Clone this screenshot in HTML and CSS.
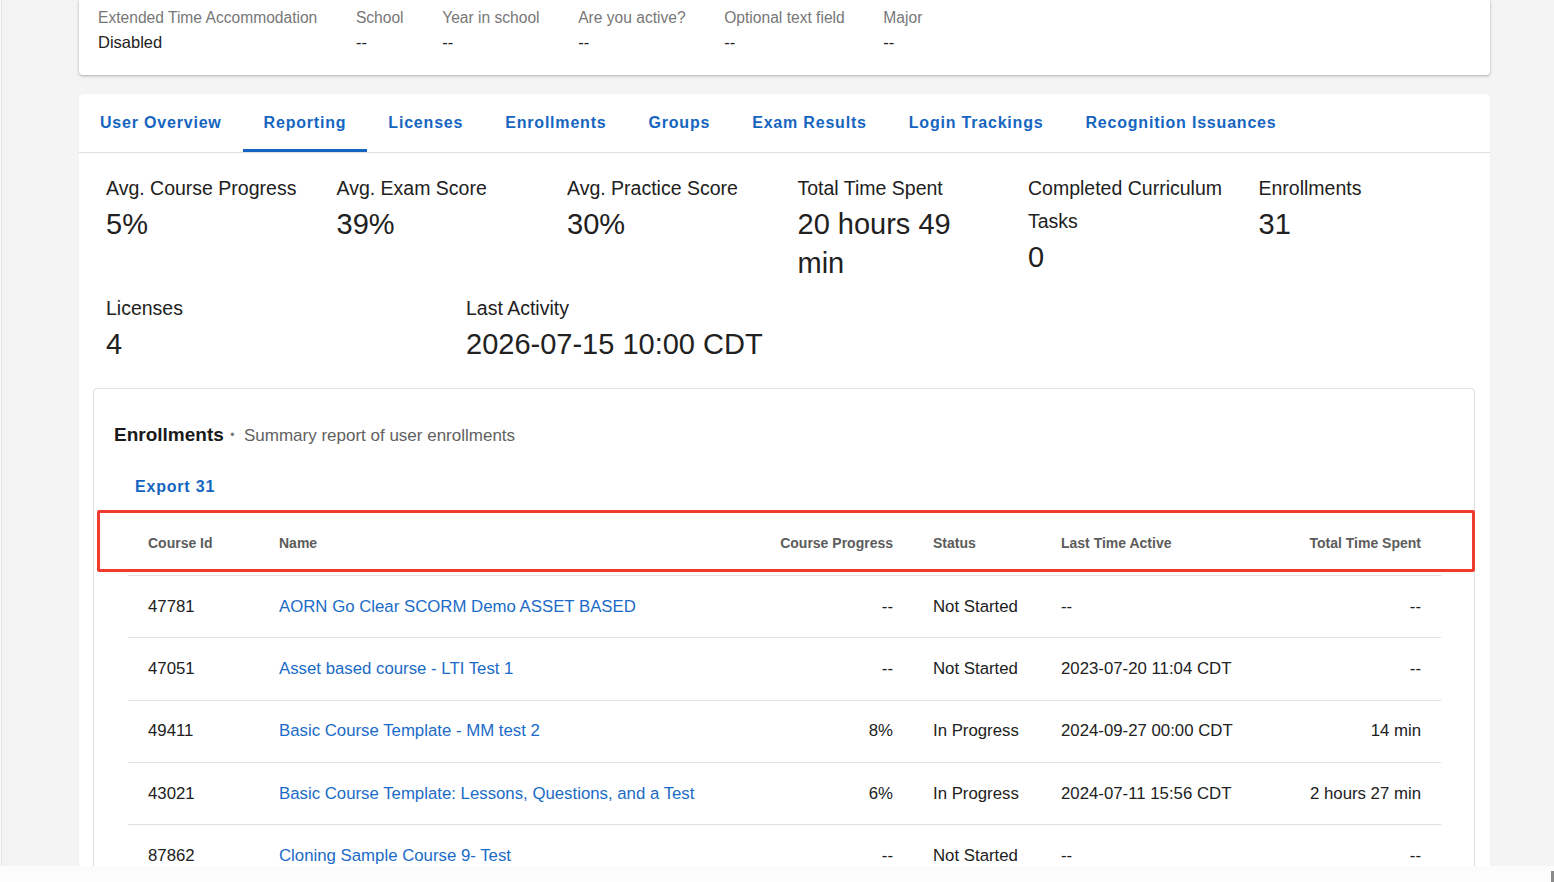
FILE: index.html
```html
<!DOCTYPE html>
<html lang="en">
<head>
	<meta charset="UTF-8">
	<title>User Reporting</title>
	<link rel="stylesheet" href="styles.css">
</head>
<body>
    <div class="profile-card">
        <div class="field">
            <div class="field-label">Extended Time Accommodation</div>
            <div class="field-value">Disabled</div>
        </div>
        <div class="field">
            <div class="field-label">School</div>
            <div class="field-value">--</div>
        </div>
        <div class="field">
            <div class="field-label">Year in school</div>
            <div class="field-value">--</div>
        </div>
        <div class="field">
            <div class="field-label">Are you active?</div>
            <div class="field-value">--</div>
        </div>
        <div class="field">
            <div class="field-label">Optional text field</div>
            <div class="field-value">--</div>
        </div>
        <div class="field">
            <div class="field-label">Major</div>
            <div class="field-value">--</div>
        </div>
    </div>

    <div class="main-card">
        <ul class="tab-header">
            <li>User Overview</li>
            <li class="active">Reporting</li>
            <li>Licenses</li>
            <li>Enrollments</li>
            <li>Groups</li>
            <li>Exam Results</li>
            <li>Login Trackings</li>
            <li>Recognition Issuances</li>
        </ul>

        <div class="stats">
            <div class="stats-row">
                <div class="stat">
                    <div class="stat-label">Avg. Course Progress</div>
                    <div class="stat-value">5%</div>
                </div>
                <div class="stat">
                    <div class="stat-label">Avg. Exam Score</div>
                    <div class="stat-value">39%</div>
                </div>
                <div class="stat">
                    <div class="stat-label">Avg. Practice Score</div>
                    <div class="stat-value">30%</div>
                </div>
                <div class="stat">
                    <div class="stat-label">Total Time Spent</div>
                    <div class="stat-value">20 hours 49 min</div>
                </div>
                <div class="stat">
                    <div class="stat-label">Completed Curriculum Tasks</div>
                    <div class="stat-value">0</div>
                </div>
                <div class="stat">
                    <div class="stat-label">Enrollments</div>
                    <div class="stat-value">31</div>
                </div>
            </div>
            <div class="stats-row stats-row-2">
                <div class="stat">
                    <div class="stat-label">Licenses</div>
                    <div class="stat-value">4</div>
                </div>
                <div class="stat">
                    <div class="stat-label">Last Activity</div>
                    <div class="stat-value">2026-07-15 10:00 CDT</div>
                </div>
            </div>
        </div>

        <div class="report-box">
            <div class="report-title">
                <span class="report-name">Enrollments</span>
                <span class="dot">&bull;</span>
                <span class="report-desc">Summary report of user enrollments</span>
            </div>
            <div class="report-actions">
                <button class="text-btn">Export 31</button>
            </div>

            <table class="report-table">
                <colgroup>
                    <col class="c-id">
                    <col class="c-name">
                    <col class="c-progress">
                    <col class="c-status">
                    <col class="c-active">
                    <col class="c-time">
                </colgroup>
                <thead>
                    <tr>
                        <th>Course Id</th>
                        <th>Name</th>
                        <th class="num">Course Progress</th>
                        <th>Status</th>
                        <th>Last Time Active</th>
                        <th class="num">Total Time Spent</th>
                    </tr>
                </thead>
                <tbody>
                    <tr>
                        <td>47781</td>
                        <td><a href="#">AORN Go Clear SCORM Demo ASSET BASED</a></td>
                        <td class="num">--</td>
                        <td>Not Started</td>
                        <td>--</td>
                        <td class="num">--</td>
                    </tr>
                    <tr>
                        <td>47051</td>
                        <td><a href="#">Asset based course - LTI Test 1</a></td>
                        <td class="num">--</td>
                        <td>Not Started</td>
                        <td>2023-07-20 11:04 CDT</td>
                        <td class="num">--</td>
                    </tr>
                    <tr>
                        <td>49411</td>
                        <td><a href="#">Basic Course Template - MM test 2</a></td>
                        <td class="num">8%</td>
                        <td>In Progress</td>
                        <td>2024-09-27 00:00 CDT</td>
                        <td class="num">14 min</td>
                    </tr>
                    <tr>
                        <td>43021</td>
                        <td><a href="#">Basic Course Template: Lessons, Questions, and a Test</a></td>
                        <td class="num">6%</td>
                        <td>In Progress</td>
                        <td>2024-07-11 15:56 CDT</td>
                        <td class="num">2 hours 27 min</td>
                    </tr>
                    <tr>
                        <td>87862</td>
                        <td><a href="#">Cloning Sample Course 9- Test</a></td>
                        <td class="num">--</td>
                        <td>Not Started</td>
                        <td>--</td>
                        <td class="num">--</td>
                    </tr>
                </tbody>
            </table>

            <!-- 标注框，盖在表头上 -->
            <div class="highlight"></div>
        </div>
    </div>

    <div class="scrollbar"><span class="thumb"></span></div>
</body>
</html>
```

FILE: styles.css
```css
html {
    background: #fafafa;
}

body {
    margin: 0 0 0 1px;
    border-left: 1px solid #e3e3e3;
    background: #f4f4f4;
    font-family: "Liberation Sans", Arial, sans-serif;
    color: #212121;
    min-height: 900px;
}

ul,
li {
    margin: 0;
    padding: 0;
}

li {
    list-style: none;
}

/* 顶部资料卡 */
.profile-card {
    display: flex;
    gap: 38.6px;
    width: 1411px;
    box-sizing: border-box;
    margin-left: 77px;
    padding: 6px 19px 21px;
    background: #fff;
    border-radius: 0 0 4px 4px;
    box-shadow: 0 1px 3px rgba(0, 0, 0, .3);
}

.field-label {
    font-size: 15.6px;
    line-height: 24px;
    color: #777;
}

.field-value {
    font-size: 16.5px;
    line-height: 24px;
    color: #212121;
}

.main-card {
    width: 1411px;
    margin: 19px 0 0 77px;
    background: #fff;
    border-radius: 4px;
    box-shadow: 0 0 1px rgba(0, 0, 0, .15);
    padding-bottom: 40px;
}

/* tabs */
.tab-header {
    display: flex;
    height: 58px;
    border-bottom: 1px solid #e0e0e0;
}

.tab-header>li {
    display: flex;
    align-items: center;
    padding: 2px 21px 0;
    font-size: 16px;
    font-weight: bold;
    letter-spacing: .05em;
    color: #1565c0;
    cursor: pointer;
    border-bottom: 3px solid transparent;
}

.tab-header .active {
    border-bottom-color: #1565c0;
}

/* 统计数字 */
.stats {
    padding: 19px 27px 0;
}

.stats-row {
    display: grid;
    grid-template-columns: repeat(6, 199px);
    column-gap: 31.5px;
}

.stats-row-2 {
    grid-template-columns: 360px auto;
    column-gap: 0;
    margin-top: 9px;
}

.stat-label {
    font-size: 19.5px;
    line-height: 33px;
    color: #212121;
}

.stat-value {
    font-size: 29px;
    line-height: 39px;
    color: #212121;
}

/* 报表 */
.report-box {
    position: relative;
    margin: 24px 15px 0 14px;
    border: 1px solid #e0e0e0;
    border-radius: 4px;
    padding: 34px 0 0;
}

.report-title {
    padding-left: 20px;
    line-height: 24px;
}

.report-name {
    font-size: 19px;
    font-weight: bold;
    color: #1a1a1a;
}

.dot {
    font-size: 12px;
    color: #777;
    margin: 0 5px 0 2px;
    vertical-align: 2px;
}

.report-desc {
    font-size: 17px;
    color: #616161;
}

.report-actions {
    margin-top: 21px;
    padding-left: 20px;
}

.text-btn {
    border: 0;
    background: none;
    padding: 8px 21px;
    font-family: inherit;
    font-size: 16px;
    line-height: 20px;
    font-weight: bold;
    letter-spacing: .05em;
    color: #1565c0;
    cursor: pointer;
}

.report-table {
    width: 1313px;
    margin: 6px 0 0 34px;
    border-collapse: collapse;
    table-layout: fixed;
}

.c-id { width: 131px; }
.c-name { width: 499px; }
.c-progress { width: 155px; }
.c-status { width: 128px; }
.c-active { width: 229px; }
.c-time { width: 171px; }

.report-table th {
    height: 64px;
    padding: 0 20px;
    text-align: left;
    font-size: 14px;
    font-weight: bold;
    color: #5c5c5c;
    border-bottom: 1px solid #e0e0e0;
}

.report-table td {
    height: 61.3px;
    padding: 0 20px;
    font-size: 16.8px;
    color: #212121;
    border-bottom: 1px solid #e0e0e0;
    white-space: nowrap;
}

.report-table .num {
    text-align: right;
}

.report-table a {
    color: #1a6bc8;
    text-decoration: none;
}

.highlight {
    position: absolute;
    left: 3px;
    right: -1px;
    top: 121px;
    height: 62px;
    box-sizing: border-box;
    border: 3px solid #ef3a2f;
    border-radius: 2px;
}

.scrollbar {
    position: fixed;
    left: 0;
    right: 0;
    bottom: 0;
    height: 16px;
    background: #fcfcfc;
}

.thumb {
    position: absolute;
    right: 0;
    bottom: 0;
    width: 3px;
    height: 11px;
    background: #8a8a8a;
}
```
